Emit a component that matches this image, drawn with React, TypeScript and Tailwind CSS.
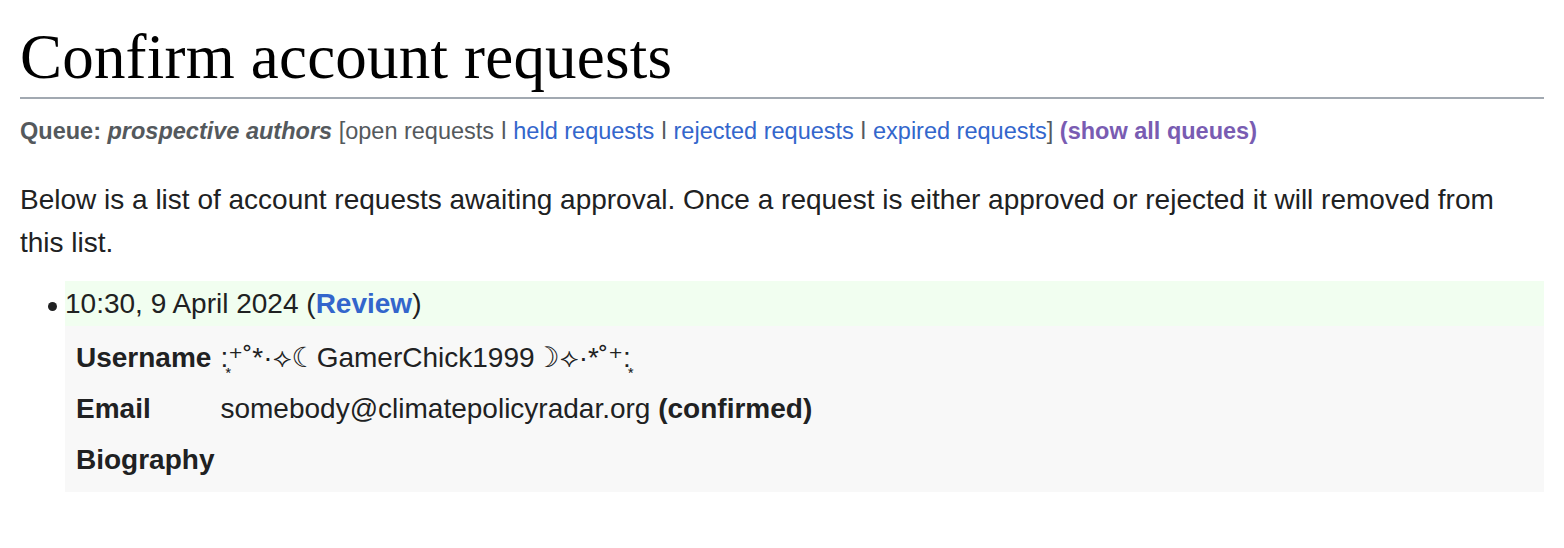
import React from "react";

export default function App() {
  const sans = { fontFamily: '"Liberation Sans", Arial, "DejaVu Sans", sans-serif' };
  return (
    <div className="bg-white min-h-[548px] px-[20px] text-[#202122]" style={sans}>
      <h1
        className="pt-[17px] text-[63px] leading-[80px] tracking-[0.2px] text-black border-b-2 border-[#a2a9b1]"
        style={{ fontFamily: '"Liberation Serif", Georgia, "DejaVu Serif", serif' }}
      >
        Confirm account requests
      </h1>
      <p className="mt-[15px] text-[23.5px] leading-[34px] text-[#54595d]">
        <b>Queue: </b>
        <b><i>prospective authors</i></b> [open requests ǀ{" "}
        <span className="text-[#3366cc]">held requests</span> ǀ{" "}
        <span className="text-[#3366cc]">rejected requests</span> ǀ{" "}
        <span className="text-[#3366cc]">expired requests</span>]{" "}
        <b className="text-[#795cb2]">(show all queues)</b>
      </p>
      <p className="mt-[30px] text-[28px] leading-[43px]">
        Below is a list of account requests awaiting approval. Once a request is either approved or rejected it will removed from this list.
      </p>
      <ul className="mt-[17px] text-[28px]">
        <li className="flex">
          <div className="w-[45px] shrink-0 h-[45px] flex items-center justify-end pr-[8px]">
            <span className="block w-[9px] h-[9px] rounded-full bg-[#202122] mt-[6px]" />
          </div>
          <div className="flex-1">
            <div className="bg-[#f1fef0] h-[45px] leading-[45px]">
              10:30, 9 April 2024 (<b className="text-[#3366cc]">Review</b>)
            </div>
            <div className="bg-[#f8f8f8] pt-[6px] pb-[7px] pl-[11px] grid grid-cols-[auto_1fr] gap-x-[6px] leading-[51px]">
              <b>Username</b>
              <span>:͙⁺˚*·⟡☾GamerChick1999☽⟡·*˚⁺:͙</span>
              <b>Email</b>
              <span>
                somebody@climatepolicyradar.org <b>(confirmed)</b>
              </span>
              <b>Biography</b>
              <span></span>
            </div>
          </div>
        </li>
      </ul>
    </div>
  );
}
